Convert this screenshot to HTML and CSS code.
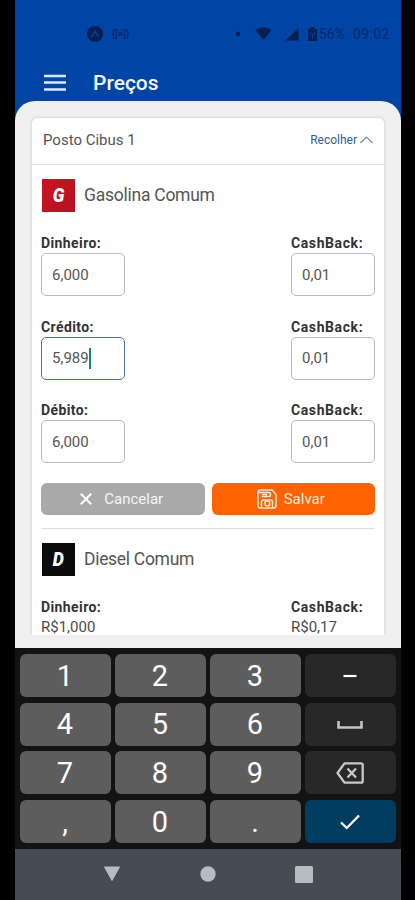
FILE: index.html
```html
<!DOCTYPE html>
<html lang="pt-BR">
<head>
<meta charset="utf-8">
<title>Preços</title>
<link rel="stylesheet" href="styles.css">
</head>
<body>
<div class="phone">
  <header class="top">
    <div class="status">
      <svg class="status-left" width="44" height="18" viewBox="0 0 44 18">
        <circle cx="8" cy="9" r="8" fill="#071f50"/>
        <path d="M4.500 12 8 6l3.500 6" fill="none" stroke="#003f9c" stroke-width="1.500"/>
        <path d="M29.500 4.500H28q-1.500 0-1.500 1.500v2l-1 1 1 1v2q0 1.500 1.500 1.500h1.500zM37.500 4.500H39q1.500 0 1.500 1.500v2l1 1-1 1v2q0 1.500-1.500 1.500h-1.500zM31.500 7l4 4M35.500 7l-4 4" fill="none" stroke="#06286a" stroke-width="1.200"/>
      </svg>
      <svg class="status-right" width="84" height="18" viewBox="0 0 84 18">
        <g fill="#071f50">
          <circle cx="3" cy="9" r="2.200"/>
          <path d="M20.500 5q8-5.500 16 0l-8 10z"/>
          <path d="M50.500 15.500 63.500 3v12.500z"/>
          <path d="M73 4h2.500V2h4v2H82v12h-9z"/>
        </g>
        <path d="M75.500 7v2.500h4V7M77.500 9v4.500" fill="none" stroke="#003f9c" stroke-width="1"/>
      </svg>
      <span class="battery">56%</span>
      <span class="clock">09:02</span>
    </div>
    <div class="appbar">
      <svg width="22" height="18" viewBox="0 0 22 18"><path d="M0 2h22M0 8.500h22M0 15.500h22" stroke="#dfe9fb" stroke-width="2.600"/></svg>
      <h1>Preços</h1>
    </div>
  </header>
  <main class="sheet">
    <section class="card">
      <div class="card-head">
        <span class="station">Posto Cibus 1</span>
        <span class="collapse">Recolher
          <svg width="13" height="8" viewBox="0 0 13 8"><path d="M.5 7 6.500 1l6 6" fill="none" stroke="#7388a8" stroke-width="1.200"/></svg>
        </span>
      </div>
      <div class="card-body">
        <div class="product"><span class="badge red"><b>G</b></span><span class="name">Gasolina Comum</span></div>
        <div class="row">
          <div class="field"><label>Dinheiro:</label><div class="input">6,000</div></div>
          <div class="field"><label class="cb">CashBack:</label><div class="input">0,01</div></div>
        </div>
        <div class="row">
          <div class="field"><label>Crédito:</label><div class="input focus">5,989<i class="caret"></i></div></div>
          <div class="field"><label class="cb">CashBack:</label><div class="input">0,01</div></div>
        </div>
        <div class="row last">
          <div class="field"><label>Débito:</label><div class="input">6,000</div></div>
          <div class="field"><label class="cb">CashBack:</label><div class="input">0,01</div></div>
        </div>
        <div class="actions">
          <div class="btn cancel"><svg width="12" height="12" viewBox="0 0 12 12"><path d="m.8.8 10.400 10.400M11.200.8.8 11.200" stroke="#fff" stroke-width="2"/></svg>Cancelar</div>
          <div class="btn save"><svg width="20" height="20" viewBox="0 0 20 20" fill="none" stroke="#ffe6d2" stroke-width="1.500"><path d="M3.500 1H15l4 4.500v11q0 2.500-2.500 2.500h-13Q1 19 1 16.500v-13Q1 1 3.500 1z"/><path d="M2 3.500h10q1.500 0 1.500 1.500v1q0 1.500-1.500 1.500H4.500M5 5.500h5M4.500 19v-6q0-2 2-2h7q2 0 2 2V19"/><circle cx="10.300" cy="14.500" r="2.500"/></svg>Salvar</div>
        </div>
        <hr>
        <div class="product"><span class="badge black"><b>D</b></span><span class="name diesel">Diesel Comum</span></div>
        <div class="row">
          <div class="field"><label>Dinheiro:</label><div class="value">R$1,000</div></div>
          <div class="field"><label class="cb">CashBack:</label><div class="value">R$0,17</div></div>
        </div>
      </div>
    </section>
  </main>
  <div class="keyboard">
    <div class="key">1</div><div class="key">2</div><div class="key">3</div>
    <div class="key dark"><svg width="14" height="4" viewBox="0 0 14 4"><path d="M.5 2h13" stroke="#fff" stroke-width="2.200"/></svg></div>
    <div class="key">4</div><div class="key">5</div><div class="key">6</div>
    <div class="key dark"><svg width="26" height="8" viewBox="0 0 26 8"><path d="M1.500 0v6.500h23V0" fill="none" stroke="#c4c4c4" stroke-width="2.600"/></svg></div>
    <div class="key">7</div><div class="key">8</div><div class="key">9</div>
    <div class="key dark"><svg width="28" height="22" viewBox="0 0 28 22"><path d="M8.500 1.300H25q1.700 0 1.700 1.700v16q0 1.700-1.700 1.700H8.500L1.500 11zM11.500 6.500l8.500 9M20 6.500l-8.500 9" fill="none" stroke="#c8c8c8" stroke-width="2.300" stroke-linejoin="round"/></svg></div>
    <div class="key">,</div><div class="key">0</div><div class="key">.</div>
    <div class="key enter"><svg width="20" height="16" viewBox="0 0 20 16"><path d="m1 8.500 5.800 5.500L19 1.500" fill="none" stroke="#fff" stroke-width="2.300"/></svg></div>
  </div>
  <nav class="nav">
    <svg width="18" height="16" viewBox="0 0 18 16"><path d="M1.500 1h15L9 14.500z" fill="#b5bdc1" stroke="#b5bdc1" stroke-linejoin="round"/></svg>
    <svg width="16" height="16" viewBox="0 0 16 16"><circle cx="8" cy="8" r="7.700" fill="#b5bdc1"/></svg>
    <svg width="18" height="17" viewBox="0 0 18 17"><rect width="18" height="17" rx="1.500" fill="#b5bdc1"/></svg>
  </nav>
</div>
</body>
</html>
```
FILE: styles.css
```css
* { box-sizing: border-box; }
body { margin: 0; background: #000; font-family: Roboto, sans-serif; color: #4c4c4c; }
svg { display: block; flex: none; }
.phone { width: 386px; height: 900px; margin-left: 15px; background: #0044a6; overflow: hidden; display: flex; flex-direction: column; }
.top { height: 101px; flex: none; }
.status { height: 68px; display: flex; align-items: center; padding-left: 72px; color: #06286a; font-size: 14px; }
.status-right { margin-left: 104px; }
.battery { width: 34px; }
.clock { letter-spacing: .4px; }
.appbar { display: flex; align-items: center; height: 30px; padding-left: 29px; gap: 27px; }
h1 { margin: 0; color: #f2f7ff; font-size: 21px; font-weight: 500; line-height: 30px; }
.sheet { height: 547px; flex: none; background: #f0f0f1; border-radius: 20px 20px 0 0; padding: 17px; }
.card { height: 517px; overflow: hidden; background: #fff; border-radius: 5px 5px 0 0; box-shadow: 0 0 3px rgba(0, 0, 0, .22); clip-path: inset(-4px -4px 0 -4px); }
.card-head { height: 47px; border-bottom: 1px solid #dedede; display: flex; align-items: center; justify-content: space-between; padding: 0 11px 3px; }
.station { font-size: 15px; color: #555; }
.collapse { display: flex; align-items: center; gap: 3px; font-size: 12px; color: #2f5c9f; }
.card-body { padding: 13px 9px 0; }
.product { height: 34px; display: flex; align-items: center; gap: 9px; margin-bottom: 21px; padding-left: 1px; }
.badge { width: 33px; height: 33px; display: flex; align-items: center; justify-content: center; color: #fff; font-size: 20px; font-style: italic; }
.badge b { font-weight: 900; transform: scaleX(.88); }
.red { background: linear-gradient(135deg, #c91523, #b81020); }
.black { background: #0b0b0b; }
.name { font-size: 17.5px; letter-spacing: -.25px; color: #555; }
.diesel { letter-spacing: -.3px; }
.row { display: flex; justify-content: space-between; margin-bottom: 20.5px; }
.last { margin-bottom: 20px; }
.field { width: 84px; }
label { display: block; height: 20px; line-height: 20px; font-size: 14px; font-weight: 700; letter-spacing: .4px; color: #333; white-space: nowrap; }
.cb { letter-spacing: .6px; }
.input { height: 43px; border: 1px solid #bababa; border-radius: 5px; padding-left: 10px; display: flex; align-items: center; font-size: 15px; color: #555; }
.focus { border-color: #4a72ae; }
.caret { width: 2px; height: 21px; background: #14866f; }
.actions { display: flex; gap: 7px; height: 32px; }
.btn { width: 163.5px; border-radius: 6px; display: flex; align-items: center; justify-content: center; color: #f5f5f5; font-size: 15px; }
.cancel { background: #a9a9a9; gap: 12px; padding-right: 2px; }
.save { background: #ff6200; gap: 7px; padding-right: 5px; color: #ffeddd; }
hr { height: 1px; border: 0; background: #dcdcdc; margin: 13px 0; }
.value { font-size: 15px; line-height: 21px; }
.keyboard { height: 201px; flex: none; background: #131313; padding: 6px 5px 0; display: grid; grid-template-columns: repeat(4, 91px); grid-auto-rows: 43px; column-gap: 4px; row-gap: 5.7px; }
.key { background: #5d5d5d; border-radius: 6px; color: #fff; font-size: 29px; line-height: 43px; display: flex; justify-content: center; align-items: center; padding: 1px 1px 0 0; }
.dark { background: #282828; }
.enter { background: #003d61; }
.nav { flex: 1; background: #454c54; display: flex; justify-content: center; gap: 79px; padding-top: 17px; }
```
